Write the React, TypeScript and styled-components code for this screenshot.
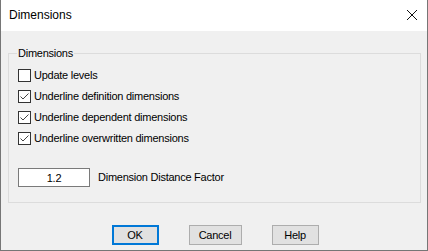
import React, { useState } from 'react';
import styled, { createGlobalStyle } from 'styled-components';

const GlobalStyle = createGlobalStyle`
  html, body {
    margin: 0;
    padding: 0;
    background: #f0f0f0;
  }
  body {
    font-family: "Liberation Sans", Arial, sans-serif;
    font-size: 11px;
    letter-spacing: -0.25px;
    color: #000;
  }
`;

const Window = styled.div`
  width: 428px;
  height: 251px;
  box-sizing: border-box;
  border: 1px solid #767676;
  border-top: none;
  background: #f0f0f0;
  display: flex;
  flex-direction: column;
`;

const TitleBar = styled.div`
  height: 31px;
  background: #fff;
  display: flex;
  align-items: center;
  justify-content: space-between;
  padding: 0 10px 0 8px;
`;

const Title = styled.span`
  font-size: 12px;
  letter-spacing: 0;
  line-height: 15px;
  margin-top: -1px;
`;

const CloseButton = styled.div`
  width: 10px;
  height: 10px;
  display: flex;
  margin-top: -1px;
`;

const Body = styled.div`
  flex: 1;
  padding: 15px 6px 0 7px;
  display: flex;
  flex-direction: column;
`;

const Group = styled.fieldset`
  margin: 0;
  border: 1px solid #dcdcdc;
  padding: 8px 8px 15px 9px;
  display: flex;
  flex-direction: column;
`;

const Legend = styled.legend`
  padding: 0 1px;
  margin-left: -1px;
  font-size: 11px;
  line-height: 15px;
`;

const CheckRow = styled.label`
  display: flex;
  align-items: center;
  height: 13px;
  gap: 3px;
  margin-bottom: 8px;
  cursor: default;
`;

const Box = styled.span<{ $checked: boolean }>`
  width: 13px;
  height: 13px;
  box-sizing: border-box;
  border: 1px solid #333;
  background: #fff;
  display: flex;
  flex-shrink: 0;
`;

const CheckText = styled.span`
  line-height: 15px;
`;

const FactorRow = styled.div`
  display: flex;
  align-items: center;
  gap: 8px;
  margin-top: 15px;
`;

const NumberField = styled.input`
  width: 72px;
  height: 19px;
  box-sizing: border-box;
  border: 1px solid #7a7a7a;
  background: #fff;
  text-align: center;
  font-family: "Liberation Sans", Arial, sans-serif;
  font-size: 11px;
  letter-spacing: -0.25px;
  padding: 0;
  outline: none;
`;

const FactorLabel = styled.span`
  line-height: 15px;
`;

const ButtonBar = styled.div`
  display: flex;
  justify-content: center;
  gap: 30px;
  margin-top: 22px;
  padding-left: 1px;
`;

const DialogButton = styled.button<{ $default?: boolean; $w: number }>`
  width: ${p => p.$w}px;
  height: 20px;
  box-sizing: border-box;
  background: #e1e1e1;
  border: ${p => (p.$default ? '2px solid #0078d7' : '1px solid #adadad')};
  font-family: "Liberation Sans", Arial, sans-serif;
  font-size: 11px;
  letter-spacing: -0.25px;
  color: #000;
  padding: 0;
  line-height: 15px;
`;

const options = [
  { label: 'Update levels', checked: false },
  { label: 'Underline definition dimensions', checked: true },
  { label: 'Underline dependent dimensions', checked: true },
  { label: 'Underline overwritten dimensions', checked: true },
];

const CheckBox: React.FC<{ label: string; initial: boolean }> = ({ label, initial }) => {
  const [checked, setChecked] = useState(initial);
  return (
    <CheckRow onClick={() => setChecked(!checked)}>
      <Box $checked={checked}>
        {checked && (
          <svg width="11" height="11" viewBox="0 0 11 11">
            <path d="M1.5 5.5 L4 8 L9.5 2.5" fill="none" stroke="#444" strokeWidth="1" />
          </svg>
        )}
      </Box>
      <CheckText>{label}</CheckText>
    </CheckRow>
  );
};

const App: React.FC = () => {
  const [factor, setFactor] = useState('1.2');

  return (
    <>
      <GlobalStyle />
      <Window>
        <TitleBar>
          <Title>Dimensions</Title>
          <CloseButton>
            <svg width="10" height="10" viewBox="0 0 10 10">
              <path d="M0 0 L10 10 M10 0 L0 10" stroke="#111" strokeWidth="1" />
            </svg>
          </CloseButton>
        </TitleBar>
        <Body>
          <Group>
            <Legend>Dimensions</Legend>
            {options.map(o => (
              <CheckBox key={o.label} label={o.label} initial={o.checked} />
            ))}
            <FactorRow>
              <NumberField value={factor} onChange={e => setFactor(e.target.value)} />
              <FactorLabel>Dimension Distance Factor</FactorLabel>
            </FactorRow>
          </Group>
          <ButtonBar>
            <DialogButton $default $w={47}>OK</DialogButton>
            <DialogButton $w={53}>Cancel</DialogButton>
            <DialogButton $w={47}>Help</DialogButton>
          </ButtonBar>
        </Body>
      </Window>
    </>
  );
};

export default App;
